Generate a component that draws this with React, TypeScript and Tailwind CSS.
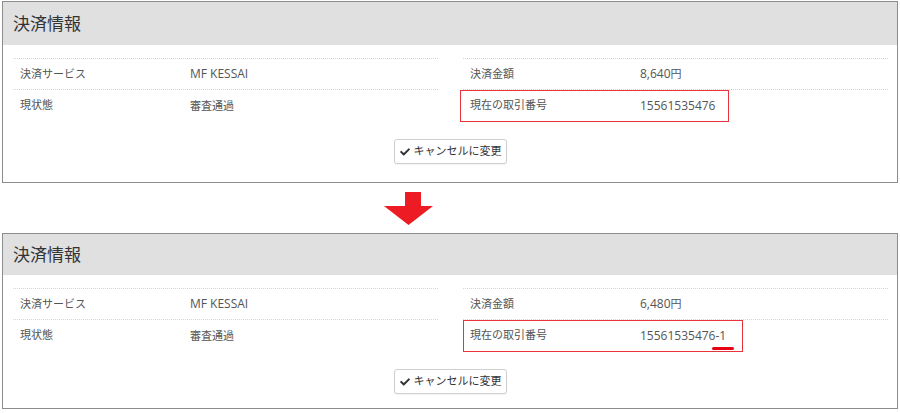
import { FaCheck } from 'react-icons/fa'

const font = { fontFamily: '"Open Sans", "Noto Sans CJK JP", sans-serif' }

type Row = { label: string; value: React.ReactNode; boxed?: boolean }

function Jp({ children }: { children: React.ReactNode }) {
  return <span className="text-[11px]">{children}</span>
}

function InfoTable({ rows, boxClass }: { rows: Row[]; boxClass: string }) {
  return (
    <div className="border-t border-dotted border-[#d6d6d6]">
      {rows.map((row, i) => (
        <div
          key={row.label}
          className={`relative flex h-[31px] items-center ${i < rows.length - 1 ? 'border-b border-dotted border-[#d6d6d6]' : ''}`}
        >
          <div className="w-[170px] pl-[7px] text-[11px] text-[#555]">{row.label}</div>
          <div className="pl-[7px] text-[12px] text-[#555]">{row.value}</div>
          {row.boxed ? (
            <div
              className={`pointer-events-none absolute top-0 h-[32px] border-[1.5px] border-[#e8323c] ${boxClass}`}
            />
          ) : null}
        </div>
      ))}
    </div>
  )
}

function Panel({
  amount,
  txn,
  headerH,
  bodyPt,
  bodyPb,
  boxClass,
}: {
  amount: string
  txn: React.ReactNode
  headerH: string
  bodyPt: string
  bodyPb: string
  boxClass: string
}) {
  return (
    <section className="border border-[#8c8c8c] bg-white">
      <div className={`flex items-center bg-[#e0e0e0] pl-[10px] ${headerH}`}>
        <h2 className="text-[17px] font-normal text-[#333]">決済情報</h2>
      </div>
      <div className={`pr-[9px] pl-[10px] ${bodyPt} ${bodyPb}`}>
        <div className="grid grid-cols-2 gap-[25px]">
          <InfoTable
            boxClass={boxClass}
            rows={[
              { label: '決済サービス', value: 'MF KESSAI' },
              { label: '現状態', value: <Jp>審査通過</Jp> },
            ]}
          />
          <InfoTable
            boxClass={boxClass}
            rows={[
              {
                label: '決済金額',
                value: (
                  <>
                    {amount}
                    <Jp>円</Jp>
                  </>
                ),
              },
              { label: '現在の取引番号', value: txn, boxed: true },
            ]}
          />
        </div>
        <div className="mt-[18px] flex justify-center">
          <button className="flex h-[25px] w-[113px] items-center justify-center gap-[4px] rounded-[3px] border border-[#cfcfcf] bg-white text-[11px] text-[#333] shadow-[0_1px_1px_rgba(0,0,0,0.05)]">
            <FaCheck className="h-[10px] w-[10px] text-[#333]" />
            キャンセルに変更
          </button>
        </div>
      </div>
    </section>
  )
}

export default function App() {
  return (
    <div className="h-[413px] w-[900px] bg-white px-[2px] pt-px" style={font}>
      <Panel
        amount="8,640"
        txn="15561535476"
        headerH="h-[43px]"
        bodyPt="pt-[13px]"
        bodyPb="pb-[18px]"
        boxClass="-left-[3px] w-[269px]"
      />
      <div className="flex h-[50px] items-start pt-[9px] pl-[382px]">
        <svg width="49" height="33" viewBox="0 0 49 33">
          <path d="M21 0 H37 V14 H49 L24.5 33 L0 14 H21 Z" fill="#ed1c24" />
        </svg>
      </div>
      <Panel
        amount="6,480"
        txn={
          <>
            15561535476
            <span className="relative">
              -1
              <span className="absolute -bottom-[6px] -left-[3px] h-[3px] w-[22px] rounded-full bg-[#e60012]" />
            </span>
          </>
        }
        headerH="h-[41px]"
        bodyPt="pt-[13px]"
        bodyPb="pb-[14px]"
        boxClass="left-0 w-[280px]"
      />
    </div>
  )
}
